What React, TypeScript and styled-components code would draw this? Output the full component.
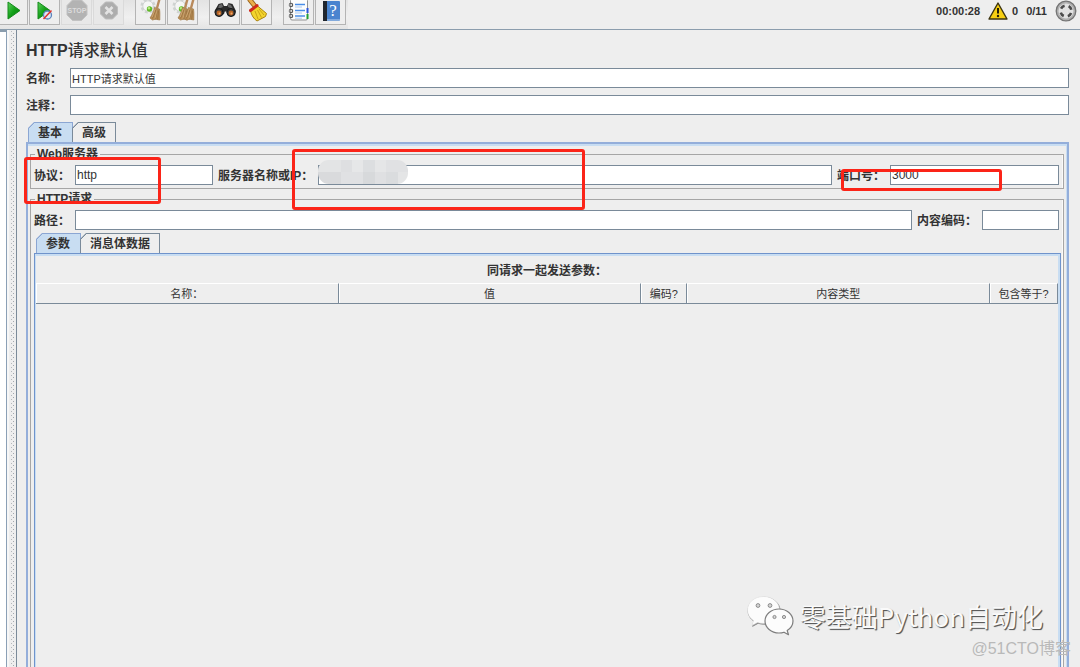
import React from 'react';
import styled, { createGlobalStyle, css } from 'styled-components';

const line = '#7a8a99';
const ink = '#333333';
const panel = '#eeeeee';
const sky = '#c8ddf2';

const GlobalStyle = createGlobalStyle`
  *, *::before, *::after { box-sizing: border-box; }
  body { margin: 0; background: ${panel}; }
  body, button, input {
    font-family: "Liberation Sans", "Noto Sans CJK SC", sans-serif;
    color: ${ink};
  }
`;

const Page = styled.div`
  position: relative;
  display: flex;
  flex-direction: column;
  min-height: 100vh;
  overflow: hidden;
  background: ${panel};
`;

const Toolbar = styled.header`
  display: flex;
  justify-content: space-between;
  height: 30px;
  border-bottom: 1px solid #8b9dad;
  background: ${panel};
`;

const Tools = styled.div`
  display: flex;
  gap: 11px;
  height: 29px;
  padding-right: 2px;
  background: linear-gradient(#e3e3e3, #f0f0f0 60%, #e4e4e4);
`;

const ToolGroup = styled.div`
  display: flex;
  gap: 1px;
`;

const ToolButton = styled.button<{ $edge?: boolean }>`
  display: flex;
  justify-content: center;
  width: ${(p) => (p.$edge ? 28 : 31)}px;
  height: 25px;
  padding: 0;
  border: 1px solid #b4b4b4;
  border-top: 0;
  ${(p) => p.$edge && css`border-left: 0;`}
  background: ${panel};
  &:disabled { border-color: #dadada; background: #e8e8e8; }
  svg { display: block; flex: none; width: 24px; height: 24px; }
`;

const Status = styled.div`
  display: flex;
  align-items: center;
  gap: 8px;
  height: 22px;
  padding-right: 3px;
  font-size: 11px;
  font-weight: 700;
  svg { display: block; }
`;

const StatusCount = styled.span`
  display: flex;
  align-items: center;
  gap: 4px;
`;

const Workspace = styled.main`
  display: flex;
  flex: 1;
`;

const TreeEdge = styled.div`
  width: 7px;
  border-top: 2px solid #8b9dad;
  border-right: 1px solid #8ba0b6;
  background: #ffffff;
`;

const Splitter = styled.div`
  width: 9px;
  border-left: 2px solid #f7f7f7;
  background-color: ${panel};
  background-image:
    linear-gradient(#b4b8bc 1px, transparent 1px),
    linear-gradient(#a2a7ad 1px, transparent 1px);
  background-size: 1px 4px, 1px 4px;
  background-position: 2px 1px, 4px 3px;
  background-repeat: repeat-y;
`;

const Editor = styled.section`
  display: flex;
  flex: 1;
  flex-direction: column;
  min-width: 0;
  padding: 11px 11px 0 9px;
  border-left: 1px solid ${line};
`;

const Title = styled.h1`
  margin: 0 0 7px;
  font-size: 16px;
  line-height: 20px;
  font-weight: 700;
  span { font-weight: 500; }
`;

const FormRow = styled.div`
  display: flex;
  align-items: center;
  gap: 8px;
  margin-bottom: 7px;
`;

const FieldRow = styled.div`
  display: flex;
  align-items: center;
  gap: 5px;
  padding-right: 2px;
`;

const Label = styled.label`
  flex: none;
  padding-top: 2px;
  font-size: 12px;
  line-height: 18px;
  font-weight: 700;
`;

const TextField = styled.input<{ $width?: number }>`
  ${(p) => (p.$width ? css`flex: none; width: ${p.$width}px;` : css`flex: 1; min-width: 0;`)}
  height: 20px;
  padding: 0 1px;
  border: 1px solid ${line};
  border-radius: 0;
  outline: 0;
  background: #ffffff;
  font-size: 12px;
`;

const NameField = styled(TextField)`
  font-size: 11px;
`;

const MaskedField = styled.div`
  position: relative;
  display: flex;
  flex: 1;
  min-width: 0;
`;

const Mask = styled.span`
  position: absolute;
  left: 0;
  top: -5px;
  width: 90px;
  height: 24px;
  border-radius: 11px;
  background:
    linear-gradient(90deg, #d9dadc 0 23px, #e0e1e3 23px 45px, #d7d9db 45px 57px, #dfe0e2 57px 68px, #dadcde 68px 80px, #e4e5e6 80px) 0 100% / 100% 50% no-repeat,
    linear-gradient(90deg, #e3e4e5 0 23px, #dedfe1 23px 34px, #e6e7e8 34px 45px, #dcdee0 45px 57px, #e5e6e7 57px 68px, #e0e1e3 68px) 0 0 / 100% 50% no-repeat;
`;

const Tabs = styled.div`
  display: flex;
  padding-left: 2px;
`;

const Tab = styled.button<{ $active?: boolean }>`
  --edge: ${(p) => (p.$active ? '#8ba6d3' : line)};
  --face: ${(p) => (p.$active ? sky : panel)};
  height: 20px;
  padding: ${(p) => (p.$active ? '0 10px 0 9px' : '0 9px')};
  margin-left: ${(p) => (p.$active ? 0 : -1)}px;
  border: 1px solid var(--edge);
  border-bottom: 0;
  background: linear-gradient(135deg, var(--edge) 0 5px, var(--face) 5px) border-box;
  clip-path: polygon(6px 0, 100% 0, 100% 100%, 0 100%, 0 6px);
  font-size: 12px;
  line-height: 18px;
  font-weight: 700;
`;

const OuterPane = styled.div`
  display: flex;
  flex: 1;
  flex-direction: column;
  gap: 4px;
  padding: 4px 3px 0 2px;
  border: 2px solid #94aeda;
  border-bottom: 0;
  box-shadow: inset 0 2px ${sky}, inset -1px 0 ${sky};
`;

const Group = styled.fieldset<{ $grow?: boolean }>`
  min-width: 0;
  margin: 0;
  padding: 4px 2px 3px 3px;
  border: 1px solid #a6a6a6;
  box-shadow: inset -1px 0 #fafafa;
  ${(p) => p.$grow && css`
    display: flex;
    flex: 1;
    flex-direction: column;
    border-bottom: 0;
    padding-bottom: 0;
  `}
`;

const Legend = styled.legend`
  margin-left: 1px;
  padding: 0 2px;
  font-size: 12px;
  line-height: 13px;
  font-weight: 700;
`;

const InnerTabs = styled(Tabs)`
  padding-top: 3px;
`;

const InnerPane = styled.div`
  flex: 1;
  padding: 7px 2px 0 1px;
  border: 1px solid #6f93cb;
  border-bottom: 0;
  box-shadow: inset 0 2px ${sky}, inset -2px 0 ${sky}, inset 1px 0 ${sky};
`;

const ParamTable = styled.table`
  width: 100%;
  table-layout: fixed;
  border-collapse: separate;
  border-spacing: 0;
  caption {
    padding-bottom: 2px;
    font-size: 12px;
    line-height: 20px;
    font-weight: 700;
  }
  th {
    height: 21px;
    padding: 0;
    border: solid;
    border-width: 1px 1px 1px 0;
    border-color: #ffffff ${line} ${line};
    box-shadow: inset 1px 0 #ffffff;
    font-size: 11px;
    line-height: 18px;
    font-weight: 400;
    white-space: nowrap;
  }
`;

const HeadCell = styled.th<{ $width?: number }>`
  ${(p) => p.$width && css`width: ${p.$width}px;`}
`;

const Highlight = styled.div`
  position: absolute;
  border: 3px solid #fb2418;
  border-radius: 3px;
  pointer-events: none;
`;

const ProtocolHighlight = styled(Highlight)`
  left: 24px;
  top: 157px;
  width: 137px;
  height: 47px;
`;

const ServerHighlight = styled(Highlight)`
  left: 292px;
  top: 149px;
  width: 293px;
  height: 61px;
`;

const PortHighlight = styled(Highlight)`
  right: 78px;
  top: 169px;
  width: 161px;
  height: 22px;
`;

const Brand = styled.div`
  position: absolute;
  right: 37px;
  bottom: 30px;
  display: flex;
  align-items: center;
  gap: 6px;
  color: #fafafa;
  font-family: "Noto Sans CJK SC", sans-serif;
  font-size: 26px;
  line-height: 42px;
  text-shadow: 1px 1px 1px #555555, 1px 1px #8a8a8a;
  svg { display: block; }
`;

const Credit = styled.div`
  position: absolute;
  right: 9px;
  bottom: 8px;
  color: #b9b9b9;
  font-size: 16px;
  line-height: 20px;
`;

const PlayShape = ({ x = 0 }: { x?: number }) => (
  <path d={`M${5 + x} 2v17l12-8.500z`} fill="url(#green)" stroke="#178a1c" strokeWidth="1" strokeLinejoin="round" />
);

const PlayIcon = () => (
  <svg viewBox="0 0 24 24" aria-hidden="true">
    <defs>
      <linearGradient id="green" x1="0" y1="0" x2="1" y2="1">
        <stop offset="0" stopColor="#5fd45c" /><stop offset=".5" stopColor="#12a018" /><stop offset="1" stopColor="#0a7c10" />
      </linearGradient>
    </defs>
    <PlayShape x={1} />
  </svg>
);

const PlayNoTimersIcon = () => (
  <svg viewBox="0 0 24 24" aria-hidden="true">
    <PlayShape />
    <circle cx="14.500" cy="15" r="4" fill="#dfe8f5" stroke="#5b83bd" strokeWidth="1.300" />
    <path d="M10.500 19l8-8.500" stroke="#e0302a" strokeWidth="1.500" />
  </svg>
);

const StopIcon = () => (
  <svg viewBox="0 0 24 24" aria-hidden="true">
    <path d="M7.500 0h9l5.500 5.500v9.500l-5.500 5.500h-9L2 15V5.500z" fill="#b3b3b3" stroke="#c2c2c2" />
    <text x="12" y="13" textAnchor="middle" fontSize="7" fontWeight="700" fill="#dcdcdc" fontFamily="Liberation Sans, sans-serif">STOP</text>
  </svg>
);

const ShutdownIcon = () => (
  <svg viewBox="0 0 24 24" aria-hidden="true">
    <path d="M8.500 2h7l5 5v7l-5 5h-7l-5-5V7z" fill="#adadad" stroke="#bdbdbd" />
    <path d="M8.500 7l7 7m0-7l-7 7" stroke="#e3e3e3" strokeWidth="2.600" />
  </svg>
);

const BroomBrush = ({ x = 0 }: { x?: number }) => (
  <g transform={`translate(${x} 0)`}>
    <path d="M18.500-1l-2.500 9" stroke="#b98a5c" strokeWidth="2.400" />
    <path d="M13.500 7.500l5 1.500c.6 3 .3 7 .3 11l-4.300-.8-3 .8-2.500-2c2-3 3.500-6.500 4.500-10.500z" fill="#b98d55" stroke="#a17a48" strokeWidth=".7" />
    <path d="M15 9.500l-3.500 9m5-9l-2 10m3-9l-.8 9" stroke="#8f6a3a" strokeWidth=".7" fill="none" />
    <path d="M14.300 8.500l-3 8.500m4.900-7.500l-2.200 9" stroke="#d9b785" strokeWidth=".6" fill="none" />
  </g>
);

const Gear = () => (
  <g>
    <circle cx="9" cy="6" r="6" fill="none" stroke="#cfd3d1" strokeWidth="3" strokeDasharray="2.700 2.012" />
    <circle cx="9" cy="6" r="5.200" fill="#f5f6f5" stroke="#c9cdcb" strokeWidth=".8" />
    <circle cx="10.500" cy="9" r="2.700" fill="#62b928" />
    <circle cx="10" cy="8.200" r="1.200" fill="#b8ee80" />
  </g>
);

const ClearIcon = () => (
  <svg viewBox="0 0 24 24" aria-hidden="true"><Gear /><BroomBrush x={2} /></svg>
);

const ClearAllIcon = () => (
  <svg viewBox="0 0 24 24" aria-hidden="true"><Gear /><BroomBrush x={-2} /><BroomBrush x={4} /></svg>
);

const SearchIcon = () => (
  <svg viewBox="0 0 24 24" aria-hidden="true">
    <path d="M5.500 4l4-1 1.500 3h3l1.500-3 4 1 3.500 7-1 4-4 1.500-4-2.500-.8-2.500h-1.400L11 14l-4 2.500L2.500 15l-1-4z" fill="#2b2b2b" />
    <path d="M6 5l3-1 1 3-5 2zm9-1l3 1 2 4-5-2z" fill="#686868" />
    <circle cx="6" cy="12.500" r="4" fill="#3b3b3b" stroke="#171717" />
    <circle cx="18" cy="12.500" r="4" fill="#3b3b3b" stroke="#171717" />
    <circle cx="6" cy="13" r="2.400" fill="#b86425" /><circle cx="18" cy="13" r="2.400" fill="#b86425" />
    <circle cx="6.500" cy="13.500" r="1" fill="#efaa6d" /><circle cx="18.500" cy="13.500" r="1" fill="#efaa6d" />
  </svg>
);

const ResetSearchIcon = () => (
  <svg viewBox="0 0 24 24" aria-hidden="true">
    <path d="M5 0l4 5" stroke="#9b641c" strokeWidth="5" strokeLinecap="round" />
    <path d="M5 0l4 5" stroke="#e9ad4c" strokeWidth="3" strokeLinecap="round" />
    <path d="M12 5.500l9.500 8-1 3-8.500 4.500c-3-2-5.500-5.500-6.500-10z" fill="#f3d42d" stroke="#aa8310" />
    <path d="M10 11l3 8m-.5-9l4 7.500M14 9l5 6" stroke="#c49d14" strokeWidth=".9" />
    <path d="M5.500 10.500l6.500-5" stroke="#cf2a1d" strokeWidth="3" strokeLinecap="round" />
  </svg>
);

const FunctionHelperIcon = () => (
  <svg viewBox="0 0 24 24" aria-hidden="true">
    <rect x="3.500" y="-1" width="17" height="21" rx="1.500" fill="#fcfcfc" stroke="#929292" />
    <path d="M8 4.500h10M8 10.500h10M8 16h10" stroke="#4a8ee8" strokeWidth="1.600" />
    <path d="M8 7h7M8 13h7M8 18.200h7" stroke="#a9c9f2" />
    <path d="M20.500 8v5" stroke="#2a55dd" strokeWidth="2" /><path d="M20.500 14v5" stroke="#22a032" strokeWidth="2" />
    {[5, 11, 16].map((y) => (
      <g key={y} fill="none"><circle cx="4" cy={y} r="1.700" stroke="#555555" strokeWidth="1.100" /><path d={`M2 ${y}h3`} stroke="#bcbcbc" /></g>
    ))}
  </svg>
);

const HelpIcon = () => (
  <svg viewBox="0 0 24 24" aria-hidden="true">
    <rect x="4" y="1" width="17" height="20" rx="1" fill="#4a84cf" />
    <rect x="4" y="1" width="4" height="20" fill="#20262e" />
    <path d="M8 20h13" stroke="#b9cfea" />
    <text x="14" y="16" textAnchor="middle" fontSize="17" fill="#ffffff" fontFamily="Liberation Serif, serif">?</text>
  </svg>
);

const WarningIcon = () => (
  <svg width="20" height="18" viewBox="0 0 20 18" aria-hidden="true">
    <path d="M10 1L19 17H1z" fill="#f7cf12" stroke="#3c3410" strokeWidth="1.400" strokeLinejoin="round" />
    <path d="M10 6v5.500" stroke="#221d08" strokeWidth="2" /><circle cx="10" cy="14" r="1.200" fill="#221d08" />
  </svg>
);

const ThreadsIcon = () => (
  <svg width="22" height="22" viewBox="0 0 22 22" aria-hidden="true">
    <circle cx="11" cy="11" r="9.800" fill="#b0b0b0" stroke="#747474" strokeWidth="1.300" />
    <circle cx="11" cy="11" r="7.500" fill="#e2e2e2" />
    <circle cx="11" cy="11" r="5.500" fill="none" stroke="#4c4c4c" strokeWidth="2.600" strokeDasharray="4.400 4.239" strokeDashoffset="-2.100" />
  </svg>
);

const ChatIcon = () => (
  <svg width="48" height="42" viewBox="0 0 48 42" aria-hidden="true">
    <g fill="#8c8c8c" stroke="#8c8c8c" strokeWidth="1" strokeLinejoin="round" transform="translate(.6 .8)">
      <path d="M17.500 1.500C8.500 1.500 1.500 7.500 1.500 15c0 4.300 2.300 8 6 10.500l-1.500 5 5.500-3c2 .6 4 .9 6 .9 9 0 16-6 16-13.400s-7-13.500-16-13.500z" />
    </g>
    <path d="M17.500 1.500C8.500 1.500 1.500 7.500 1.500 15c0 4.300 2.300 8 6 10.500l-1.500 5 5.500-3c2 .6 4 .9 6 .9 9 0 16-6 16-13.400s-7-13.500-16-13.500z" fill="#fcfcfc" stroke="#d8d8d8" strokeWidth=".5" />
    <path d="M33 14c-7.700 0-14 5.400-14 12s6.300 12 14 12c1.700 0 3.400-.2 5-.8l4.500 2.500-1.300-4.200c3.500-2.200 5.800-5.600 5.800-9.500 0-6.600-6.300-12-14-12z" fill="#fcfcfc" stroke="#7d7d7d" strokeWidth="1.200" strokeLinejoin="round" />
    <g fill="#d5d5d5" stroke="#777777" strokeWidth=".8">
      <circle cx="12" cy="10.500" r="1.900" /><circle cx="24" cy="10.500" r="1.900" />
      <circle cx="28.500" cy="22" r="1.600" /><circle cx="38" cy="22" r="1.600" />
    </g>
  </svg>
);

export default function App() {
  return (
    <Page>
      <GlobalStyle />
      <Toolbar>
        <Tools>
          <ToolGroup>
            <ToolButton $edge aria-label="启动"><PlayIcon /></ToolButton>
            <ToolButton aria-label="不停顿开始"><PlayNoTimersIcon /></ToolButton>
            <ToolButton disabled aria-label="停止"><StopIcon /></ToolButton>
            <ToolButton disabled aria-label="关闭"><ShutdownIcon /></ToolButton>
          </ToolGroup>
          <ToolGroup>
            <ToolButton aria-label="清除"><ClearIcon /></ToolButton>
            <ToolButton aria-label="清除全部"><ClearAllIcon /></ToolButton>
          </ToolGroup>
          <ToolGroup>
            <ToolButton aria-label="查找"><SearchIcon /></ToolButton>
            <ToolButton aria-label="重置搜索"><ResetSearchIcon /></ToolButton>
          </ToolGroup>
          <ToolGroup>
            <ToolButton aria-label="函数助手对话框"><FunctionHelperIcon /></ToolButton>
            <ToolButton aria-label="帮助"><HelpIcon /></ToolButton>
          </ToolGroup>
        </Tools>
        <Status>
          <span>00:00:28</span>
          <StatusCount><WarningIcon />0</StatusCount>
          <span>0/11</span>
          <ThreadsIcon />
        </Status>
      </Toolbar>

      <Workspace>
        <TreeEdge />
        <Splitter />
        <Editor>
          <Title>HTTP<span>请求默认值</span></Title>
          <FormRow>
            <Label htmlFor="name">名称：</Label>
            <NameField id="name" defaultValue="HTTP请求默认值" />
          </FormRow>
          <FormRow>
            <Label htmlFor="comment">注释：</Label>
            <NameField id="comment" />
          </FormRow>

          <Tabs role="tablist">
            <Tab $active role="tab" aria-selected="true">基本</Tab>
            <Tab role="tab" aria-selected="false">高级</Tab>
          </Tabs>
          <OuterPane role="tabpanel">
            <Group>
              <Legend>Web服务器</Legend>
              <FieldRow>
                <Label htmlFor="protocol">协议：</Label>
                <TextField id="protocol" $width={138} defaultValue="http" />
                <Label htmlFor="server">服务器名称或IP：</Label>
                <MaskedField>
                  <TextField id="server" />
                  <Mask />
                </MaskedField>
                <Label htmlFor="port">端口号：</Label>
                <TextField id="port" $width={169} defaultValue="3000" />
              </FieldRow>
            </Group>
            <Group $grow>
              <Legend>HTTP请求</Legend>
              <FieldRow>
                <Label htmlFor="path">路径：</Label>
                <TextField id="path" />
                <Label htmlFor="encoding">内容编码：</Label>
                <TextField id="encoding" $width={77} />
              </FieldRow>
              <InnerTabs role="tablist">
                <Tab $active role="tab" aria-selected="true">参数</Tab>
                <Tab role="tab" aria-selected="false">消息体数据</Tab>
              </InnerTabs>
              <InnerPane role="tabpanel">
                <ParamTable>
                  <caption>同请求一起发送参数：</caption>
                  <thead>
                    <tr>
                      <HeadCell scope="col">名称：</HeadCell>
                      <HeadCell scope="col">值</HeadCell>
                      <HeadCell scope="col" $width={46}>编码?</HeadCell>
                      <HeadCell scope="col">内容类型</HeadCell>
                      <HeadCell scope="col" $width={68}>包含等于?</HeadCell>
                    </tr>
                  </thead>
                </ParamTable>
              </InnerPane>
            </Group>
          </OuterPane>
        </Editor>
      </Workspace>

      <ProtocolHighlight />
      <ServerHighlight />
      <PortHighlight />
      <Brand><ChatIcon />零基础Python自动化</Brand>
      <Credit>@51CTO博客</Credit>
    </Page>
  );
}
